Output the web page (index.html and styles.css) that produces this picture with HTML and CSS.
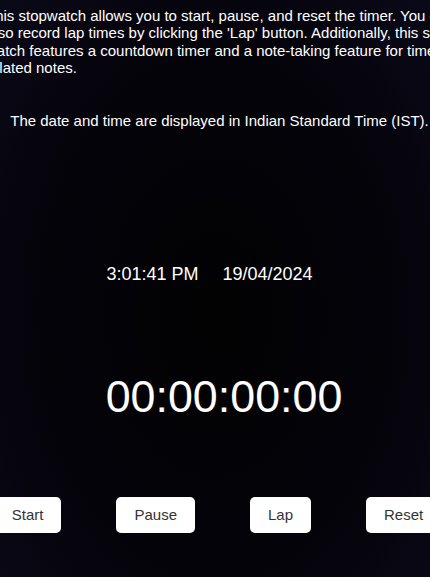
FILE: index.html
```
<!DOCTYPE html>
<html lang="en">
<head>
<meta charset="utf-8">
<title>Stopwatch</title>
<link rel="stylesheet" href="styles.css">
</head>
<body>
<main class="page">
  <p class="desc">This stopwatch allows you to start, pause, and reset the timer. You can<br>also record lap times by clicking the 'Lap' button. Additionally, this stop-<br>watch features a countdown timer and a note-taking feature for time-<br>related notes.</p>
  <p class="note">The date and time are displayed in Indian Standard Time (IST).</p>
  <div class="clock">
    <span class="clock-time">3:01:41 PM</span>
    <span class="clock-date">19/04/2024</span>
  </div>
  <div class="timer">00:00:00:00</div>
  <div class="controls">
    <button class="btn">Start</button>
    <button class="btn">Pause</button>
    <button class="btn">Lap</button>
    <button class="btn">Reset</button>
  </div>
</main>
</body>
</html>
```
FILE: styles.css
```
html, body {
  margin: 0;
  padding: 0;
  height: 100%;
}
body {
  overflow: hidden;
  background: radial-gradient(ellipse at 50% 55%, #020203 0%, #040309 55%, #0a0918 100%);
  color: #ffffff;
  font-family: "Liberation Sans", Arial, sans-serif;
}
.page {
  width: 470px;
  margin-left: -17px;
  display: flex;
  flex-direction: column;
}
.desc {
  margin: 7px 0 0 3px;
  font-size: 15px;
  line-height: 17.25px;
  white-space: nowrap;
}
.note {
  margin: 36px 0 0 0;
  font-size: 15px;
  line-height: 17.25px;
  text-align: center;
  padding-left: 3px;
}
.clock {
  margin-top: 135px;
  display: flex;
  justify-content: center;
  gap: 24px;
  padding-right: 17px;
  font-size: 18px;
  line-height: 20.7px;
}
.timer {
  margin-top: 86px;
  text-align: center;
  padding-left: 12px;
  font-size: 44.8px;
  line-height: 51.5px;
}
.controls {
  margin-top: 75px;
  display: flex;
  justify-content: center;
  gap: 55px;
  padding-right: 1px;
}
.btn {
  height: 35.5px;
  padding: 0 18px;
  border: none;
  border-radius: 5px;
  background: #ffffff;
  color: #333333;
  font-family: "Liberation Sans", Arial, sans-serif;
  font-size: 15px;
  line-height: 34px;
}
```
